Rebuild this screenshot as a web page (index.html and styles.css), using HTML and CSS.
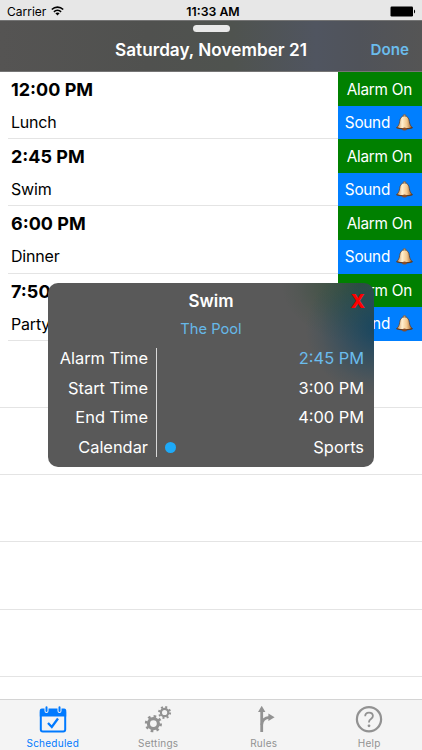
FILE: index.html
```html
<!DOCTYPE html>
<html lang="en">

<head>
  <meta charset="UTF-8">
  <meta name="viewport" content="width=device-width, initial-scale=1.0">
  <title>Scheduled</title>
  <link rel="stylesheet" href="styles.css">
</head>

<body>
  <svg width="0" height="0" class="defs">
    <defs>
      <linearGradient id="gold" x1="0" x2="1" y1="0" y2="0">
        <stop offset="0" stop-color="#b97a42" />
        <stop offset=".35" stop-color="#fff0d0" />
        <stop offset=".65" stop-color="#f3c88e" />
        <stop offset="1" stop-color="#8a4d20" />
      </linearGradient>
      <symbol id="bell" viewBox="0 0 17 17">
        <circle cx="8.5" cy="1.6" r="1.2" fill="#e8c79a" stroke="#6b4a30" stroke-width=".6" />
        <path d="M8.5 1.9C5.3 1.9 4 4.6 3.7 7.3C3.4 10 2.6 12 .5 13.7C3 15.3 14 15.3 16.5 13.7C14.4 12 13.6 10 13.3 7.3C13 4.6 11.7 1.9 8.5 1.9Z" fill="url(#gold)" stroke="#5a3a24" stroke-width=".7" />
        <path d="M.7 13.6C4 15.2 13 15.2 16.3 13.6" fill="none" stroke="#5a3418" stroke-width=".9" />
        <ellipse cx="8.5" cy="15.1" rx="2.4" ry="1.5" fill="#8a4d28" />
      </symbol>
    </defs>
  </svg>

  <div class="screen">
    <div class="status-bar">
      <div class="carrier">
        <span>Carrier</span>
        <svg width="13" height="10" viewBox="0 0 13 10" fill="none" stroke="#000" stroke-width="1.6">
          <path d="M.8 3.5C4 .3 9 .3 12.2 3.5" />
          <path d="M2.9 5.8C4.9 3.9 8.1 3.9 10.1 5.8" />
          <path d="M6.5 9.4L4.4 7.3C5.6 6.2 7.4 6.2 8.6 7.3Z" fill="#000" stroke="none" />
        </svg>
      </div>
      <span class="clock">11:33 AM</span>
      <svg class="battery" width="26" height="11" viewBox="0 0 26 11">
        <rect x=".5" y=".5" width="22.5" height="10" rx="1.2" />
        <path d="M24 3.5C25.5 4 25.5 7 24 7.5Z" />
      </svg>
    </div>

    <div class="header">
      <div class="grabber"></div>
      <div class="header-row">
        <span></span>
        <span class="title">Saturday, November 21</span>
        <span class="done">Done</span>
      </div>
    </div>

    <div class="list">
      <div class="row">
        <div class="event">
          <div class="time">12:00 PM</div>
          <div class="name">Lunch</div>
        </div>
        <div class="actions">
          <div class="alarm">Alarm On</div>
          <div class="sound">Sound <svg width="17" height="17"><use href="#bell" /></svg></div>
        </div>
      </div>
      <div class="row">
        <div class="event">
          <div class="time">2:45 PM</div>
          <div class="name">Swim</div>
        </div>
        <div class="actions">
          <div class="alarm">Alarm On</div>
          <div class="sound">Sound <svg width="17" height="17"><use href="#bell" /></svg></div>
        </div>
      </div>
      <div class="row">
        <div class="event">
          <div class="time">6:00 PM</div>
          <div class="name">Dinner</div>
        </div>
        <div class="actions">
          <div class="alarm">Alarm On</div>
          <div class="sound">Sound <svg width="17" height="17"><use href="#bell" /></svg></div>
        </div>
      </div>
      <div class="row">
        <div class="event">
          <div class="time">7:50 PM</div>
          <div class="name">Party</div>
        </div>
        <div class="actions">
          <div class="alarm">Alarm On</div>
          <div class="sound">Sound <svg width="17" height="17"><use href="#bell" /></svg></div>
        </div>
      </div>
      <div class="row empty"></div>
      <div class="row empty"></div>
      <div class="row empty"></div>
      <div class="row empty"></div>
      <div class="row empty"></div>
      <div class="row empty"></div>
    </div>

    <div class="tab-bar">
      <div class="tab active">
        <svg width="28" height="28" viewBox="0 0 28 28" fill="none">
          <rect x="1.8" y="4" width="24.4" height="21.6" rx="2" stroke="currentColor" stroke-width="2" />
          <path d="M.8 10.5V4.5Q.8 2.5 2.8 2.5H25.2Q27.2 2.5 27.2 4.5V10.5Z" fill="currentColor" />
          <path d="M7.5 1.2V5M20.5 1.2V5" stroke="#f4f4f4" stroke-width="4" stroke-linecap="round" />
          <path d="M7.5 1.2V5M20.5 1.2V5" stroke="currentColor" stroke-width="2" stroke-linecap="round" />
          <path d="M9 17L12.8 21L19 12.5" stroke="currentColor" stroke-width="2.3" />
        </svg>
        <span>Scheduled</span>
      </div>
      <div class="tab">
        <svg width="28" height="28" viewBox="0 0 28 28" fill="none" stroke="currentColor">
          <circle cx="9.4" cy="17.6" r="5" stroke-width="3.2" />
          <circle cx="9.4" cy="17.6" r="7.3" stroke-width="2.6" stroke-dasharray="2.6 3.13" />
          <circle cx="20.6" cy="6.5" r="3.7" stroke-width="2.2" />
          <circle cx="20.6" cy="6.5" r="5.5" stroke-width="2" stroke-dasharray="2 2.32" />
        </svg>
        <span>Settings</span>
      </div>
      <div class="tab">
        <svg width="28" height="28" viewBox="0 0 28 28" fill="none">
          <path d="M11.7 26V5" stroke="currentColor" stroke-width="2.8" />
          <path d="M11.7 19C12 14.5 14.5 11.8 19.5 11.4" stroke="currentColor" stroke-width="2.6" />
          <path d="M11.7 -.2L15.4 6H8Z" fill="currentColor" />
          <path d="M24.6 11.3L18.4 15.1V7.5Z" fill="currentColor" />
        </svg>
        <span>Rules</span>
      </div>
      <div class="tab">
        <svg width="28" height="28" viewBox="0 0 28 28" fill="none" stroke="currentColor">
          <circle cx="14" cy="13.2" r="12.1" stroke-width="2.2" />
          <path d="M10.2 10.3C10.2 8 11.7 6.7 14 6.7C16.3 6.7 17.9 8.1 17.9 10.1C17.9 13.1 14 12.9 14 15.9V16.5" stroke-width="1.8" />
          <circle cx="14" cy="19.8" r="1.4" fill="currentColor" stroke="none" />
        </svg>
        <span>Help</span>
      </div>
    </div>

    <div class="popup">
      <div class="popup-title">Swim</div>
      <div class="close">X</div>
      <div class="place">The Pool</div>
      <div class="details">
        <div class="labels">
          <div>Alarm Time</div>
          <div>Start Time</div>
          <div>End Time</div>
          <div>Calendar</div>
        </div>
        <div class="values">
          <div class="blue">2:45 PM</div>
          <div>3:00 PM</div>
          <div>4:00 PM</div>
          <div class="calendar"><span class="dot"></span>Sports</div>
        </div>
      </div>
    </div>
  </div>
</body>

</html>
```
FILE: styles.css
```css
* {
  box-sizing: border-box;
}

body {
  margin: 0;
  font-family: Inter, "Liberation Sans", sans-serif;
  color: #000;
  background: #fff;
}

.defs {
  position: absolute;
}

.screen {
  position: relative;
  width: 422px;
  height: 750px;
  overflow: hidden;
  display: flex;
  flex-direction: column;
}

.status-bar {
  height: 20px;
  flex: none;
  display: grid;
  grid-template-columns: 1fr auto 1fr;
  align-items: center;
  padding: 2px 6px 0 7px;
  background: #e7e7e7;
  font-size: 12px;
}

.carrier {
  display: flex;
  align-items: center;
  gap: 5px;
}

.clock {
  padding-left: 3px;
  font-size: 12.3px;
  font-weight: 600;
}

.battery {
  justify-self: end;
}

.header {
  height: 52px;
  flex: none;
  background: linear-gradient(90deg, #555453 0%, #50514f 35%, #4f534f 55%, #505560 75%, #50535a 85%, #555 100%);
  border-top: 1px solid #747474;
  border-bottom: 1px solid #757575;
  color: #fff;
}

.grabber {
  width: 37px;
  height: 7px;
  margin: 4px auto 0;
  border-radius: 4px;
  background: #e8e8e8;
}

.header-row {
  display: grid;
  grid-template-columns: 1fr auto 1fr;
  align-items: center;
  height: 34px;
  padding: 0 13px;
  font-weight: 600;
}

.title {
  font-size: 17.2px;
}

.done {
  justify-self: end;
  color: #6bbcec;
  font-size: 15.2px;
}

.list {
  flex: 1;
  min-height: 0;
  overflow: hidden;
}

.row {
  display: flex;
  height: 67.2px;
  margin-left: 8px;
  border-bottom: 1px solid #e4e4e4;
}

.row.empty {
  margin-left: 0;
}

.event {
  flex: 1;
  padding-left: 3px;
}

.time {
  height: 34px;
  line-height: 35px;
  font-size: 18px;
  font-weight: 700;
}

.name {
  line-height: 33px;
  font-size: 16px;
  letter-spacing: -.2px;
}

.actions {
  width: 84px;
  height: 67.2px;
  color: #fff;
  font-size: 15.3px;
  letter-spacing: -.25px;
}

.alarm,
.sound {
  height: 33.6px;
  display: flex;
  align-items: center;
  justify-content: flex-end;
  padding-right: 10px;
}

.alarm {
  padding-top: 1px;
  background: #008000;
}

.sound {
  gap: 6px;
  padding-right: 9px;
  background: #007fff;
}

.tab-bar {
  height: 51px;
  flex: none;
  display: flex;
  background: #f4f4f4;
  border-top: 1px solid #d4d4d4;
}

.tab {
  flex: 1;
  display: flex;
  flex-direction: column;
  align-items: center;
  padding-top: 6px;
  color: #929292;
  font-size: 10px;
  line-height: 12px;
  letter-spacing: .25px;
}

.tab span {
  margin-top: 3px;
}

.tab.active {
  color: #007aff;
}

.popup {
  position: absolute;
  left: 48px;
  top: 283px;
  width: 326px;
  height: 184px;
  padding: 8px 10px 0;
  border-radius: 10px;
  background:
    radial-gradient(ellipse 75px 68px at 102% 25%, rgba(10, 66, 98, .85), rgba(10, 66, 98, .4) 50%, rgba(10, 66, 98, .12) 80%, rgba(10, 66, 98, 0)),
    radial-gradient(ellipse 80px 60px at 96% 0%, rgba(35, 75, 45, .7), rgba(35, 75, 45, .35) 50%, rgba(35, 75, 45, .1) 80%, rgba(35, 75, 45, 0)),
    #595959;
  color: #fff;
  font-size: 16.4px;
}

.popup-title {
  line-height: 21px;
  text-align: center;
  font-size: 17px;
  font-weight: 600;
}

.close {
  position: absolute;
  top: 7px;
  right: 9px;
  color: #f00;
  font-size: 19px;
  font-weight: 800;
  line-height: 24px;
}

.place {
  margin-top: 7px;
  line-height: 20px;
  text-align: center;
  color: #66b8e8;
  font-size: 14.7px;
}

.details {
  display: flex;
  margin-top: 9px;
}

.labels {
  width: 99px;
  height: 109px;
  padding-right: 8px;
  border-right: 1px solid #d8d8d8;
  text-align: right;
  white-space: nowrap;
}

.labels div,
.values div {
  height: 29.6px;
  line-height: 20px;
}

.values {
  flex: 1;
  text-align: right;
}

.blue {
  color: #6bbcec;
}

.values .calendar {
  display: flex;
  justify-content: space-between;
  padding-left: 8px;
}

.dot {
  width: 11px;
  height: 11px;
  margin-top: 5px;
  border-radius: 50%;
  background: #1eaaf8;
}
```
